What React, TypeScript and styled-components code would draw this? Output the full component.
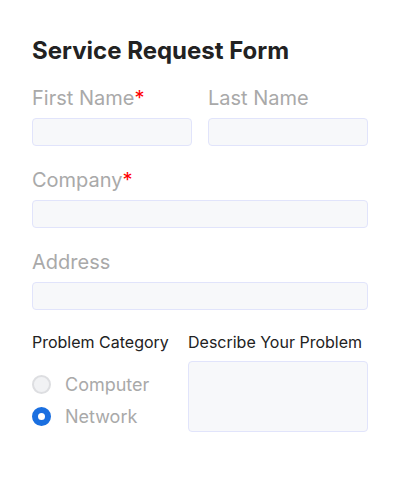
import React from "react";
import styled, { createGlobalStyle } from "styled-components";

const Global = createGlobalStyle`
  html, body { margin: 0; padding: 0; background: #ffffff; }
  body { font-family: Inter, "Noto Sans", sans-serif; }
  * { box-sizing: border-box; }
`;

const Form = styled.form`
  width: 400px;
  padding: 36px 32px 0 32px;
  display: flex;
  flex-direction: column;
`;

const Title = styled.h1`
  margin: 0 0 20px 0;
  font-size: 24px;
  line-height: 30px;
  font-weight: 700;
  color: #222222;
`;

const Row = styled.div<{ $cols?: string }>`
  display: grid;
  grid-template-columns: ${(p) => p.$cols ?? "1fr"};
  column-gap: 16px;
  margin-bottom: 22px;
`;

const Field = styled.div`
  display: flex;
  flex-direction: column;
`;

const Label = styled.label`
  font-size: 20px;
  line-height: 24px;
  color: #a9a9a9;
  margin-bottom: 8px;
`;

const Req = styled.span`
  color: #ff0000;
`;

const Input = styled.input`
  height: 28px;
  width: 100%;
  border: 1px solid #e1e4fb;
  border-radius: 4px;
  background: #f7f8fa;
  outline: none;
`;

const SubLabel = styled.div`
  font-size: 16px;
  line-height: 20px;
  color: #222222;
  margin-bottom: 9px;
`;

const Radios = styled.div`
  display: flex;
  flex-direction: column;
  gap: 13px;
  margin-top: 14px;
`;

const RadioRow = styled.label`
  display: flex;
  align-items: center;
  gap: 14px;
  font-size: 18px;
  line-height: 19px;
  color: #a9a9a9;
`;

const RadioDot = styled.span<{ $on: boolean }>`
  flex: none;
  width: 19px;
  height: 19px;
  border-radius: 50%;
  ${(p) =>
    p.$on
      ? `background: #ffffff; border: 6px solid #1a6fe0;`
      : `background: #f1f2f4; border: 2px solid #dddee1;`}
`;

const TextArea = styled.textarea`
  height: 71px;
  width: 100%;
  border: 1px solid #e1e4fb;
  border-radius: 4px;
  background: #f7f8fa;
  outline: none;
  resize: none;
`;

export default function App() {
  return (
    <>
      <Global />
      <Form>
        <Title>Service Request Form</Title>
        <Row $cols="160px 160px">
          <Field>
            <Label>
              First Name<Req>*</Req>
            </Label>
            <Input />
          </Field>
          <Field>
            <Label>Last Name</Label>
            <Input />
          </Field>
        </Row>
        <Row>
          <Field>
            <Label>
              Company<Req>*</Req>
            </Label>
            <Input />
          </Field>
        </Row>
        <Row>
          <Field>
            <Label>Address</Label>
            <Input />
          </Field>
        </Row>
        <Row $cols="140px 180px">
          <Field>
            <SubLabel>Problem Category</SubLabel>
            <Radios>
              <RadioRow>
                <RadioDot $on={false} />
                Computer
              </RadioRow>
              <RadioRow>
                <RadioDot $on={true} />
                Network
              </RadioRow>
            </Radios>
          </Field>
          <Field>
            <SubLabel>Describe Your Problem</SubLabel>
            <TextArea />
          </Field>
        </Row>
      </Form>
    </>
  );
}
